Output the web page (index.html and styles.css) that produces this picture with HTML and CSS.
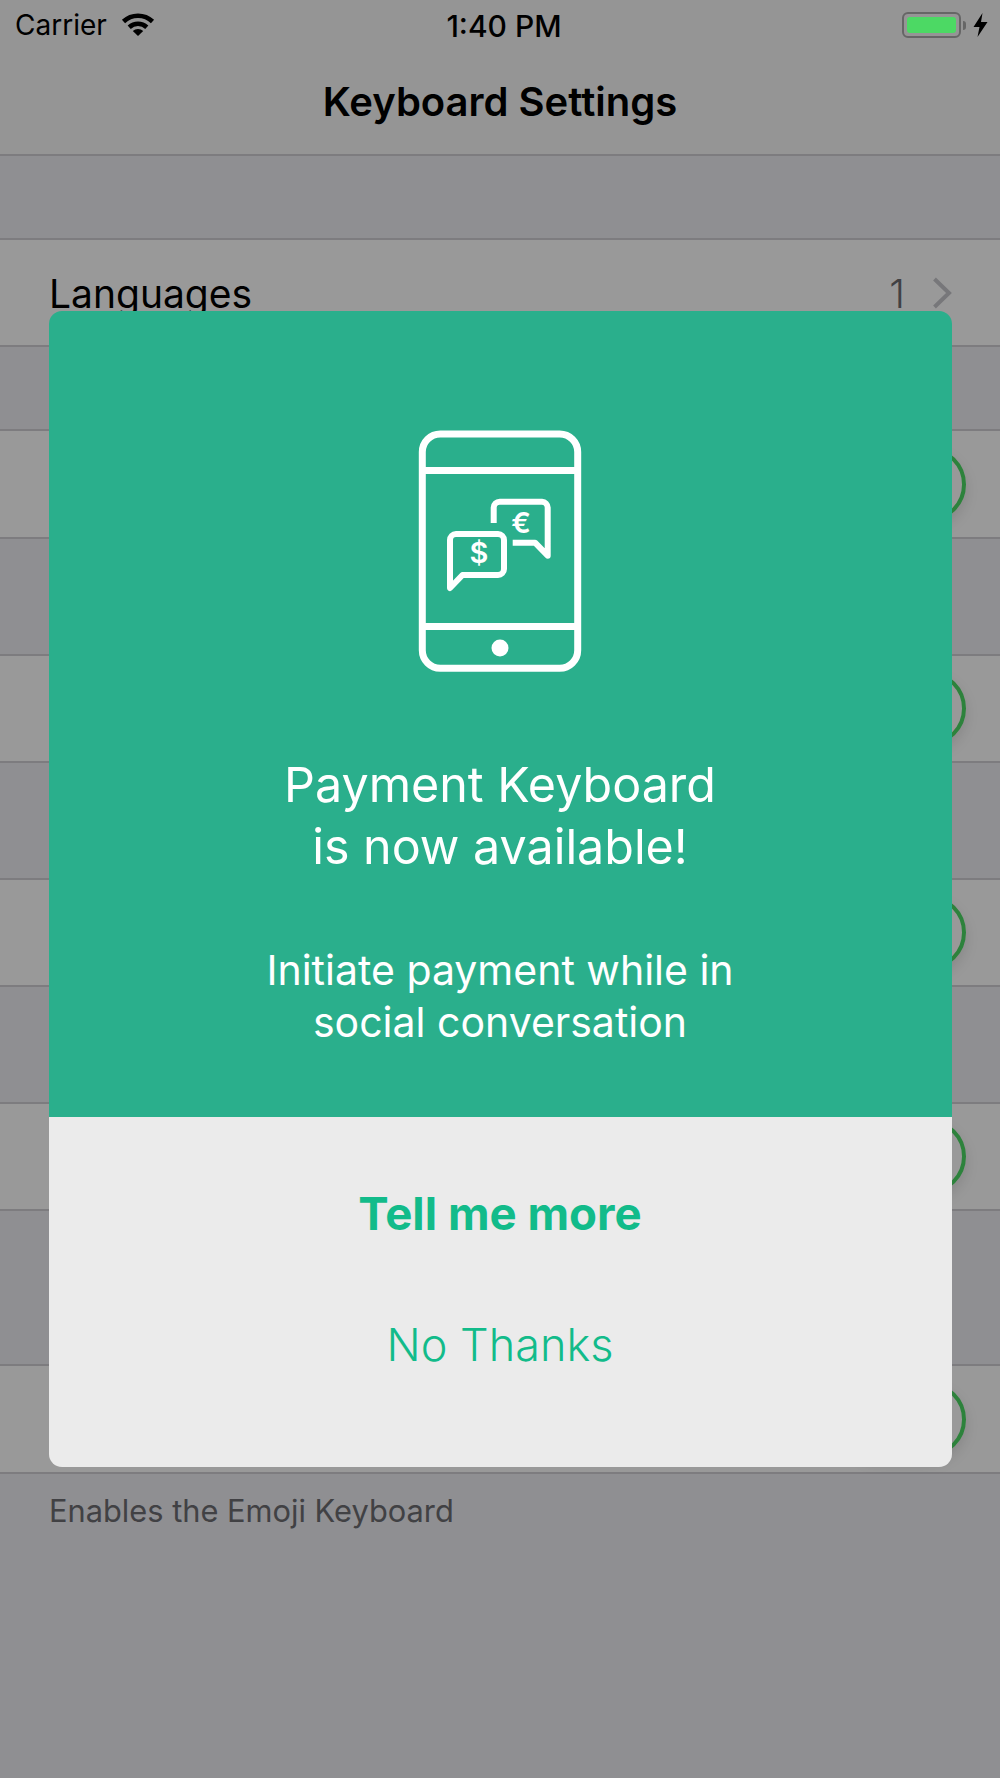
FILE: index.html
```html
<!DOCTYPE html>
<html lang="en">
<head>
  <meta charset="UTF-8" />
  <title>Keyboard Settings</title>
  <link rel="stylesheet" href="styles.css">
</head>
<body>
  <div class="screen">
    <div class="nav">
      <div class="status-bar">
        <div class="status-left">
          <span>Carrier</span>
          <svg class="wifi" viewBox="0 0 34 24" width="34" height="24">
            <path d="M2.5 9.5 A21 21 0 0 1 31.5 9.5" fill="none" stroke="#000" stroke-width="4.6" />
            <path d="M8.2 15.2 A13 13 0 0 1 25.8 15.2" fill="none" stroke="#000" stroke-width="4.6" />
            <path d="M11.8 19 A7.5 7.5 0 0 1 22.2 19 L17 24 Z" fill="#000" />
          </svg>
        </div>
        <div class="status-time">1:40 PM</div>
        <div class="status-right">
          <div class="battery"><div class="battery-fill"></div></div>
          <div class="battery-nub"></div>
          <svg class="bolt" viewBox="0 0 15 24" width="15" height="24">
            <path d="M9.5 0 L0.5 14 L6.5 14 L4.5 24 L14.5 9 L8 9 Z" fill="#000" />
          </svg>
        </div>
      </div>
      <div class="nav-title">Keyboard Settings</div>
    </div>

    <div class="gap gap-top"></div>
    <div class="row row-short">
      <span class="row-label">Languages</span>
      <div class="row-detail">
        <span class="row-value">1</span>
        <svg class="chevron" viewBox="0 0 20 32" width="20" height="32">
          <path d="M2.5 2 L17 16 L2.5 30" fill="none" stroke="#c7c7cc" stroke-width="4" />
        </svg>
      </div>
    </div>
    <div class="gap gap-top"></div>
    <div class="row"><div class="toggle"></div></div>
    <div class="gap gap-mid"></div>
    <div class="row row-short"><div class="toggle"></div></div>
    <div class="gap gap-mid"></div>
    <div class="row row-short"><div class="toggle"></div></div>
    <div class="gap gap-mid"></div>
    <div class="row row-short"><div class="toggle"></div></div>
    <div class="gap gap-tall"></div>
    <div class="row"><div class="toggle"></div></div>
    <div class="caption">Enables the Emoji Keyboard</div>

    <div class="overlay">
      <div class="modal">
        <div class="modal-top">
          <svg class="phone-icon" viewBox="0 0 220 280" width="220" height="280">
            <g fill="none" stroke="#fff" stroke-width="7">
              <rect x="32.3" y="24" width="155.4" height="234.3" rx="18" />
              <path d="M32 60.5 H188 M32 216.5 H188" />
            </g>
            <circle cx="110" cy="238" r="8.5" fill="#fff" />
            <g fill="none" stroke="#fff" stroke-width="6" stroke-linecap="round" stroke-linejoin="round">
              <path d="M60 130 A6 6 0 0 1 66 124 H108 A6 6 0 0 1 114 130 V159 A6 6 0 0 1 108 165 H72.5 L60 178 Z" />
              <path d="M103.7 113 V97.5 A6 6 0 0 1 109.7 91.7 H152 A6 6 0 0 1 157.7 97.5 V145.7 L145 132.7 H122.7" stroke-linecap="butt" />
            </g>
            <text class="currency" x="89" y="153">$</text>
            <text class="currency" x="131" y="123">€</text>
          </svg>
          <h1 class="modal-title">Payment Keyboard<br>is now available!</h1>
          <p class="modal-text">Initiate payment while in<br>social conversation</p>
        </div>
        <div class="modal-bottom">
          <button class="modal-btn modal-btn-main">Tell me more</button>
          <button class="modal-btn">No Thanks</button>
        </div>
      </div>
    </div>
  </div>
</body>
</html>
```

FILE: styles.css
```css
body {
  margin: 0;
  font-family: Inter, "Liberation Sans", sans-serif;
  background: #efeff4;
}
.screen {
  position: relative;
  width: 1000px;
  height: 1778px;
  overflow: hidden;
  background: #efeff4;
}
.nav {
  height: 156px;
  background: #f8f8f8;
  border-bottom: 2px solid #d0cfd4;
  box-sizing: border-box;
}
.status-bar {
  position: relative;
  z-index: 2;
  height: 50px;
  padding: 0 12px 0 15px;
  display: flex;
  align-items: center;
  justify-content: space-between;
  font-size: 28px;
  color: #000;
}
.status-left {
  display: flex;
  align-items: center;
  gap: 14px;
  width: 300px;
}
.wifi {
  margin-top: -2px;
}
.status-time {
  padding: 2px 0 0 5px;
  font-size: 30px;
  font-weight: 500;
}
.status-right {
  width: 300px;
  display: flex;
  align-items: center;
  justify-content: flex-end;
}
.battery {
  box-sizing: border-box;
  width: 59px;
  height: 26px;
  padding: 3px;
  border: 2.5px solid #666;
  border-radius: 6px;
}
.battery-fill {
  height: 100%;
  background: #4cd964;
  border-radius: 3px;
}
.battery-nub {
  width: 3px;
  height: 9px;
  margin-left: 2px;
  background: #666;
  border-radius: 0 4px 4px 0;
}
.bolt {
  margin-left: 7px;
}
.nav-title {
  margin-top: 19px;
  text-align: center;
  font-size: 40px;
  line-height: 66px;
  font-weight: 600;
  color: #000;
}
.gap {
  box-sizing: border-box;
  border-bottom: 2px solid #d0cfd4;
}
.gap-top {
  height: 84px;
}
.gap-mid {
  height: 117px;
}
.gap-tall {
  height: 155px;
}
.row {
  box-sizing: border-box;
  height: 108px;
  padding: 0 34px 0 49px;
  display: flex;
  align-items: center;
  justify-content: space-between;
  background: #fff;
  border-bottom: 2px solid #d0cfd4;
}
.row-short {
  height: 107px;
}
.row-label {
  padding-top: 1px;
  font-size: 39px;
  color: #000;
}
.row-detail {
  display: flex;
  align-items: center;
  gap: 27px;
  margin-right: 14px;
}
.row-value {
  padding-top: 1px;
  font-size: 40px;
  font-weight: 300;
  color: #6d6d72;
}
.toggle {
  box-sizing: border-box;
  width: 123px;
  height: 75px;
  margin-left: auto;
  border: 4px solid #4cd964;
  border-radius: 38px;
  box-shadow: 0 6px 14px rgba(0, 0, 0, 0.12);
}
.caption {
  padding: 19px 49px 0;
  font-size: 30.8px;
  line-height: 36px;
  color: #6d6d72;
}
.overlay {
  position: absolute;
  inset: 0;
  z-index: 1;
  display: flex;
  align-items: center;
  justify-content: center;
  background: rgba(0, 0, 0, 0.4);
}
.modal {
  width: 903px;
  border-radius: 13px;
  overflow: hidden;
}
.modal-top {
  padding: 99px 0 69px;
  text-align: center;
  background: #2aaf8c;
  color: #fff;
}
.phone-icon {
  display: block;
  margin: 0 auto;
}
.currency {
  font-family: Inter, sans-serif;
  font-size: 29px;
  font-weight: 600;
  fill: #fff;
  text-anchor: middle;
}
.modal-title {
  margin: 64px 0 0;
  font-size: 48.4px;
  line-height: 62px;
  font-weight: 400;
}
.modal-text {
  margin: 66px 0 0;
  font-size: 41px;
  line-height: 52px;
  font-weight: 400;
}
.modal-bottom {
  padding: 31px 0 57px;
  background: #ebebeb;
}
.modal-btn {
  display: block;
  width: 100%;
  height: 131px;
  padding: 0;
  border: none;
  background: none;
  font-family: inherit;
  font-size: 45px;
  font-weight: 300;
  color: #12bb8a;
}
.modal-btn-main {
  font-size: 45.6px;
  font-weight: 700;
}
```
